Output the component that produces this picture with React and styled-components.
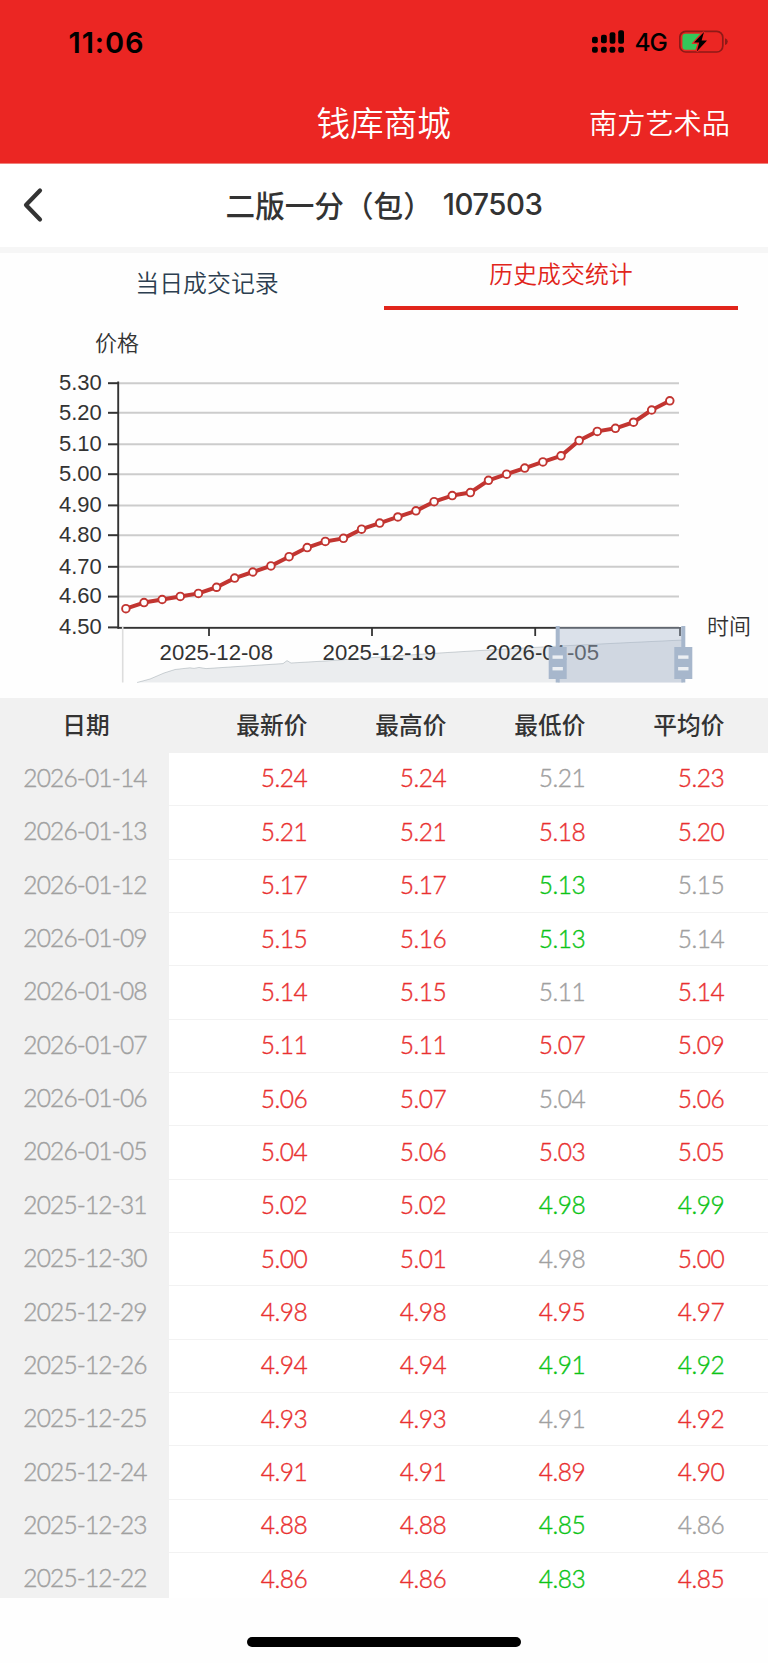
import React from "react";
import styled, { createGlobalStyle } from "styled-components";

const CJK = '"Noto Sans CJK SC", sans-serif';
const RED = "#eb2623";

const Global = createGlobalStyle`
  * { box-sizing: border-box; }
  body { margin: 0; background: #fff; font-family: ${CJK}; color: #333; }
`;

const Screen = styled.div`
  width: 768px;
  height: 1663px;
  display: flex;
  flex-direction: column;
  overflow: hidden;
  background: #fefefe;
`;

const TopArea = styled.header`
  height: 164px;
  flex: none;
  background: ${RED};
  border-bottom: 1px solid #f0807a;
`;

const StatusBar = styled.div`
  height: 83px;
  padding: 1px 40px 0 68.5px;
  display: flex;
  justify-content: space-between;
  align-items: center;
  color: #000;
  font-family: Inter, sans-serif;
`;

const Clock = styled.span`
  font-size: 29px;
  font-weight: 600;
  letter-spacing: 0.9px;
`;

const StatusIcons = styled.div`
  display: flex;
  align-items: center;
`;

const Network = styled.span`
  width: 31px;
  margin: 0 13.5px 0 9.5px;
  font-size: 24.5px;
  font-weight: 500;
  letter-spacing: -1px;
  white-space: nowrap;
`;

const AppBar = styled.div`
  height: 76px;
  padding: 0 38px 0 316.5px;
  display: flex;
  align-items: center;
  justify-content: space-between;
  color: #fff;
  font-weight: 350;
`;

const AppName = styled.span`
  font-size: 33.6px;
`;

const Exchange = styled.span`
  font-size: 28.2px;
`;

const TitleBar = styled.div`
  height: 88.5px;
  flex: none;
  padding: 0 22px;
  display: grid;
  grid-template-columns: 40px 1fr 40px;
  align-items: center;
  border-bottom: 6.5px solid #f6f6f6;
  background: #fff;
`;

const Title = styled.h1`
  margin: 0;
  padding-bottom: 1px;
  display: flex;
  justify-content: center;
  align-items: center;
  font-size: 29.6px;
  line-height: 40px;
  font-weight: 500;
  white-space: pre;
`;

const Code = styled.span`
  margin-left: 10px;
  font-family: Inter, sans-serif;
  font-size: 29.4px;
  letter-spacing: -0.5px;
`;

const Tabs = styled.nav`
  height: 57.5px;
  flex: none;
  padding: 0 30px;
  display: grid;
  grid-template-columns: 354px 354px;
`;

const Tab = styled.div`
  display: flex;
  justify-content: center;
  font-size: 23.9px;
  font-weight: 350;
  line-height: 34px;
  padding-top: ${(p) => (p.$active ? 3 : 12)}px;
  color: ${(p) => (p.$active ? "#e1251b" : "#2c3e50")};
  border-bottom: ${(p) => (p.$active ? "4px solid #e1251b" : "0")};
`;

const ChartBox = styled.section`
  height: 387.7px;
  flex: none;
`;

const ChartSvg = styled.svg`
  display: block;
`;

const Table = styled.section`
  height: 900.8px;
  flex: none;
  overflow: hidden;
`;

const HeadRow = styled.div`
  height: 55.1px;
  padding-bottom: 2px;
  display: grid;
  grid-template-columns: 169px repeat(4, 139px) 1fr;
  align-items: center;
  background: #f1f1f1;
  font-size: 23.7px;
  font-weight: 500;
  line-height: 34px;
`;

const HeadCell = styled.span`
  text-align: ${(p) => (p.$first ? "center" : "right")};
  padding-left: ${(p) => (p.$first ? 3 : 0)}px;
  padding-right: ${(p) => (p.$first ? 0 : 0.6)}px;
`;

const Row = styled.div`
  height: 53.36px;
  display: grid;
  grid-template-columns: 169px 1fr;
  font-family: Lato, sans-serif;
  font-weight: 300;
  font-size: 24.5px;
  -webkit-text-stroke: 0.4px currentColor;
`;

const DateCell = styled.div`
  display: flex;
  align-items: center;
  justify-content: center;
  padding: 0 0 4px 1px;
  background: #f1f1f1;
  color: #a0a0a0;
  letter-spacing: -0.85px;
`;

const Values = styled.div`
  display: grid;
  grid-template-columns: repeat(4, 139px);
  align-items: center;
  padding-bottom: 2px;
  background: #fff;
  border-bottom: 1.6px solid #f2f2f2;
`;

const tones = { r: "#e93030", g: "#0cc417", n: "#a0a0a0" };

const Price = styled.span`
  text-align: right;
  padding-right: 0.8px;
  letter-spacing: -0.5px;
  color: ${(p) => tones[p.$tone]};
`;

const HomeArea = styled.div`
  flex: 1;
  display: flex;
  justify-content: center;
  padding-top: 38.8px;
`;

const HomeBar = styled.div`
  width: 274px;
  height: 9.5px;
  border-radius: 5px;
  background: #000;
`;

const rows = [
  ["2026-01-14", "5.24", "5.24", "5.21", "5.23", "rrnr"],
  ["2026-01-13", "5.21", "5.21", "5.18", "5.20", "rrrr"],
  ["2026-01-12", "5.17", "5.17", "5.13", "5.15", "rrgn"],
  ["2026-01-09", "5.15", "5.16", "5.13", "5.14", "rrgn"],
  ["2026-01-08", "5.14", "5.15", "5.11", "5.14", "rrnr"],
  ["2026-01-07", "5.11", "5.11", "5.07", "5.09", "rrrr"],
  ["2026-01-06", "5.06", "5.07", "5.04", "5.06", "rrnr"],
  ["2026-01-05", "5.04", "5.06", "5.03", "5.05", "rrrr"],
  ["2025-12-31", "5.02", "5.02", "4.98", "4.99", "rrgg"],
  ["2025-12-30", "5.00", "5.01", "4.98", "5.00", "rrnr"],
  ["2025-12-29", "4.98", "4.98", "4.95", "4.97", "rrrr"],
  ["2025-12-26", "4.94", "4.94", "4.91", "4.92", "rrgg"],
  ["2025-12-25", "4.93", "4.93", "4.91", "4.92", "rrnr"],
  ["2025-12-24", "4.91", "4.91", "4.89", "4.90", "rrrr"],
  ["2025-12-23", "4.88", "4.88", "4.85", "4.86", "rrgn"],
  ["2025-12-22", "4.86", "4.86", "4.83", "4.85", "rrgr"],
];

const series = [
  4.56, 4.58, 4.59, 4.6, 4.61, 4.63, 4.66, 4.68, 4.7, 4.73, 4.76, 4.78, 4.79,
  4.82, 4.84, 4.86, 4.88, 4.91, 4.93, 4.94, 4.98, 5.0, 5.02, 5.04, 5.06, 5.11,
  5.14, 5.15, 5.17, 5.21, 5.24,
];

const gridLines = [
  ["5.30", 73.2], ["5.20", 102.8], ["5.10", 134.3], ["5.00", 164.2],
  ["4.90", 195.4], ["4.80", 225.2], ["4.70", 256.8], ["4.60", 286.6],
  ["4.50", 317.4],
];

function Handle({ x }) {
  return (
    <g fill="#a7b7cc">
      <rect x={x - 2} y="316" width="4" height="56.5" />
      <rect x={x - 9} y="337" width="18" height="32" />
      <rect x={x - 5.2} y="345.4" width="10.4" height="3.4" fill="#eceff3" />
      <rect x={x - 5.2} y="357" width="10.4" height="3.4" fill="#eceff3" />
    </g>
  );
}

function PriceChart() {
  const pts = series.map((v, i) => [
    125.9 + i * 18.13,
    317 - ((v - 4.5) / 0.8) * 244.5,
  ]);
  const shadow =
    "137,372.5 150,369 164,363 175,359.5 190,357.8 194,358.4 199,357.4 206,358.6 230,357 283,353.6 287,350.6 291,353 325,351 380,347 430,343.6 480,340.5 560,336 620,333 683,330";
  return (
    <ChartSvg width="768" height="387" viewBox="0 0 768 387">
      <text x="117" y="41" fontFamily={CJK} fontSize="22" fontWeight="350" textAnchor="middle" fill="#333">价格</text>
      <text x="729" y="324.4" fontFamily={CJK} fontSize="22" fontWeight="350" textAnchor="middle" fill="#333">时间</text>
      {gridLines.map(([label, y]) => (
        <g key={label}>
          <line x1="118" x2="679" y1={y} y2={y} stroke="#ccc" strokeWidth="2" />
          <line x1="108" x2="119" y1={y} y2={y} stroke="#333" strokeWidth="2" />
          <text x="101.8" y={y + 6.8} textAnchor="end" fontFamily='"Liberation Sans", sans-serif' fontSize="22" fill="#333">{label}</text>
        </g>
      ))}
      <line x1="118.2" x2="118.2" y1="71.5" y2="318.5" stroke="#333" strokeWidth="1.9" />
      <line x1="117.5" x2="681" y1="317.9" y2="317.9" stroke="#333" strokeWidth="1.8" />
      {[209, 372, 535.2, 680].map((x) => (
        <line key={x} x1={x} x2={x} y1="317.5" y2="326" stroke="#333" strokeWidth="1.8" />
      ))}
      <polyline points={pts.map((p) => p.join(",")).join(" ")} fill="none" stroke="#c23531" strokeWidth="4" strokeLinejoin="round" />
      {pts.map(([x, y]) => (
        <circle key={x} cx={x} cy={y} r="3.8" fill="#fff" stroke="#c23531" strokeWidth="1.9" />
      ))}
      {[["2025-12-08", 216.3], ["2025-12-19", 379.3], ["2026-01-05", 542.3]].map(([d, x]) => (
        <text key={d} x={x} y="350.4" textAnchor="middle" fontFamily='"Liberation Sans", sans-serif' fontSize="22.2" fill="#333">{d}</text>
      ))}
      <polygon points={shadow + " 683,372.5"} fill="#2f4554" fillOpacity="0.09" />
      <polyline points={shadow} fill="none" stroke="#2f4554" strokeOpacity="0.22" strokeWidth="1" />
      <line x1="122.7" x2="122.7" y1="317" y2="372.5" stroke="#ddd" strokeWidth="1.6" />
      <rect x="558" y="317" width="125" height="55.5" fill="#a7b7cc" fillOpacity="0.4" />
      <Handle x={557.7} />
      <Handle x={683.3} />
    </ChartSvg>
  );
}

function Signal() {
  return (
    <svg width="33" height="24" viewBox="0 0 33 24">
      {[[0, 7.5, 6], [9, 5.5, 8], [17.6, 3, 11], [26.2, 1, 13]].map(([x, y, h]) => (
        <g key={x}>
          <rect x={x} y={y - 0.7} width="5.8" height={h + 0.4} rx="2" />
          <rect x={x} y="16.8" width="5.8" height="6" rx="2" />
        </g>
      ))}
    </svg>
  );
}

function Battery() {
  return (
    <svg width="49" height="24" viewBox="0 0 49 24">
      <rect x="0.8" y="1.4" width="43" height="20.6" rx="6" fill="none" stroke="#8e1a17" strokeWidth="1.7" />
      <path d="M46 8.2 Q48.8 9.2 48.8 11.6 Q48.8 14 46 15Z" fill="#8e1a17" />
      <path d="M6.4 3.8 H21.5 L13 13.5 H18.6 L16.5 19.8 H6.4 Q3.4 19.8 3.4 16.8 V6.8 Q3.4 3.8 6.4 3.8Z" fill="#34c759" />
      <path d="M25 2 L15 12.6 H20.2 L17.8 21.4 L28 10.4 H22.6Z" fill="#000" stroke={RED} strokeWidth="2.2" paintOrder="stroke" />
    </svg>
  );
}

export default function App() {
  return (
    <Screen>
      <Global />
      <TopArea>
        <StatusBar>
          <Clock>11:06</Clock>
          <StatusIcons>
            <Signal />
            <Network>4G</Network>
            <Battery />
          </StatusIcons>
        </StatusBar>
        <AppBar>
          <AppName>钱库商城</AppName>
          <Exchange>南方艺术品</Exchange>
        </AppBar>
      </TopArea>
      <TitleBar>
        <svg width="22" height="36" viewBox="0 0 22 36">
          <path d="M18 3.5 L4 18 L18 32.5" fill="none" stroke="#333" strokeWidth="4.2" strokeLinecap="round" strokeLinejoin="round" />
        </svg>
        <Title>二版一分（包）<Code>107503</Code></Title>
      </TitleBar>
      <Tabs>
        <Tab>当日成交记录</Tab>
        <Tab $active>历史成交统计</Tab>
      </Tabs>
      <ChartBox>
        <PriceChart />
      </ChartBox>
      <Table>
        <HeadRow>
          <HeadCell $first>日期</HeadCell>
          <HeadCell>最新价</HeadCell>
          <HeadCell>最高价</HeadCell>
          <HeadCell>最低价</HeadCell>
          <HeadCell>平均价</HeadCell>
        </HeadRow>
        {rows.map(([date, a, b, c, d, t]) => (
          <Row key={date}>
            <DateCell>{date}</DateCell>
            <Values>
              {[a, b, c, d].map((v, i) => (
                <Price key={i} $tone={t[i]}>{v}</Price>
              ))}
            </Values>
          </Row>
        ))}
      </Table>
      <HomeArea>
        <HomeBar />
      </HomeArea>
    </Screen>
  );
}
